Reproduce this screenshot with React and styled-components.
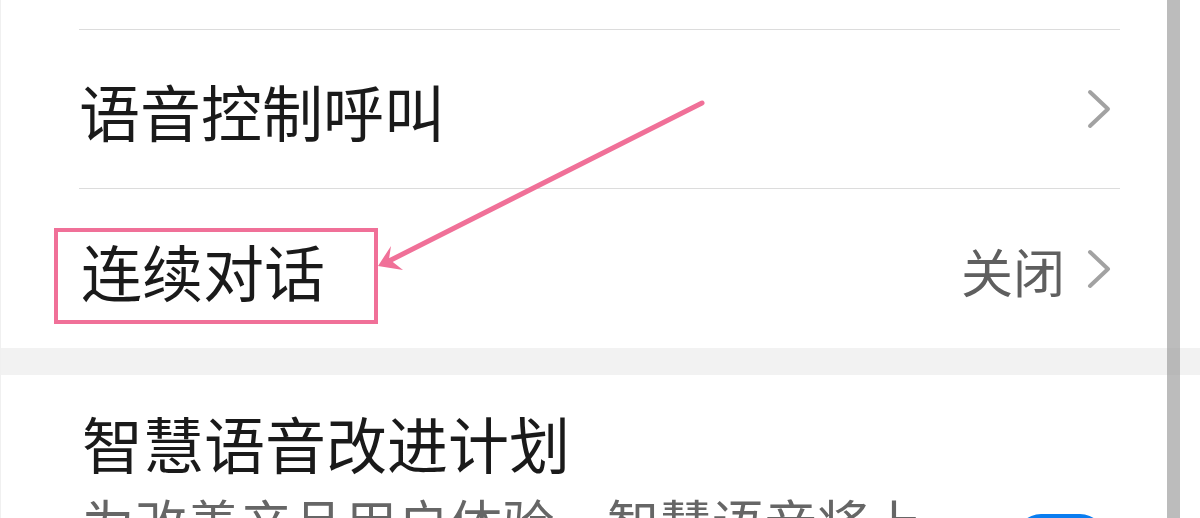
import React from "react";
import styled, { createGlobalStyle } from "styled-components";

const Global = createGlobalStyle`
  html, body { margin: 0; padding: 0; background: #ffffff; }
  body { font-family: "Noto Sans CJK SC", "Noto Sans", sans-serif; }
`;

const Page = styled.div`
  position: relative;
  width: 1200px;
  height: 518px;
  overflow: hidden;
  background: #ffffff;
  border-left: 1px solid #f0f0f0;
  box-sizing: border-box;
`;

const Group = styled.section`
  background: #ffffff;
  padding: 0 80px 0 78px;
`;

const Stub = styled.div`
  height: 29px;
`;

const Row = styled.div`
  display: flex;
  align-items: center;
  justify-content: space-between;
  height: ${(p) => p.$h}px;
  border-top: 1px solid #dcdcdc;
  box-sizing: border-box;
  padding-right: 8px;
`;

const Title = styled.div`
  font-size: 61px;
  line-height: 61px;
  color: #1a1a1a;
  padding-left: ${(p) => p.$indent || 0}px;
  padding-top: 3px;
`;

const Trail = styled.div`
  display: flex;
  align-items: center;
  gap: 21px;
`;

const Value = styled.span`
  font-size: 52px;
  line-height: 52px;
  color: #5f5f5f;
  padding-top: 4px;
`;

const Chevron = () => (
  <svg width="26" height="42" viewBox="0 0 26 42">
    <path
      d="M4 4 L22 21 L4 38"
      fill="none"
      stroke="#a2a2a2"
      strokeWidth="4"
      strokeLinecap="round"
      strokeLinejoin="round"
    />
  </svg>
);

const Band = styled.div`
  height: 27px;
  background: #f2f2f2;
`;

const PlanRow = styled.div`
  display: flex;
  justify-content: space-between;
  align-items: flex-start;
  padding: 32px 0 0 3px;
`;

const TextBlock = styled.div`
  display: flex;
  flex-direction: column;
  max-width: 860px;
`;

const PlanTitle = styled.div`
  font-size: 61px;
  line-height: 72px;
  color: #1a1a1a;
`;

const Sub = styled.div`
  font-size: 52.5px;
  line-height: 62px;
  color: #666666;
  margin-top: 11px;
`;

const Toggle = styled.div`
  width: 89px;
  height: 50px;
  border-radius: 25px;
  background: #0a7df0;
  margin-top: 107px;
  margin-right: 15px;
  flex-shrink: 0;
`;

const Scrollbar = styled.div`
  position: absolute;
  top: 0;
  bottom: 0;
  left: 1166px;
  width: 13px;
  background: rgba(160, 160, 160, 0.7);
`;

const Highlight = styled.div`
  position: absolute;
  left: 53px;
  top: 228px;
  width: 324px;
  height: 96px;
  border: 4px solid #f07098;
  box-sizing: border-box;
`;

const Overlay = styled.svg`
  position: absolute;
  left: 0;
  top: 0;
  pointer-events: none;
`;

export default function App() {
  return (
    <>
      <Global />
      <Page>
        <Group>
          <Stub />
          <Row $h={159}>
            <Title>语音控制呼叫</Title>
            <Chevron />
          </Row>
          <Row $h={160}>
            <Title $indent={2}>连续对话</Title>
            <Trail>
              <Value>关闭</Value>
              <Chevron />
            </Trail>
          </Row>
        </Group>
        <Band />
        <Group>
          <PlanRow>
            <TextBlock>
              <PlanTitle>智慧语音改进计划</PlanTitle>
              <Sub>为改善产品用户体验，智慧语音将上传部分匿名语音数据</Sub>
            </TextBlock>
            <Toggle />
          </PlanRow>
        </Group>
        <Scrollbar />
        <Highlight />
        <Overlay width="1200" height="518" viewBox="0 0 1200 518">
          <line
            x1="701"
            y1="103"
            x2="386"
            y2="262"
            stroke="#f07098"
            strokeWidth="5"
            strokeLinecap="round"
          />
          <polygon points="377,266 390,246 388,259 402,270" fill="#f07098" />
        </Overlay>
      </Page>
    </>
  );
}
